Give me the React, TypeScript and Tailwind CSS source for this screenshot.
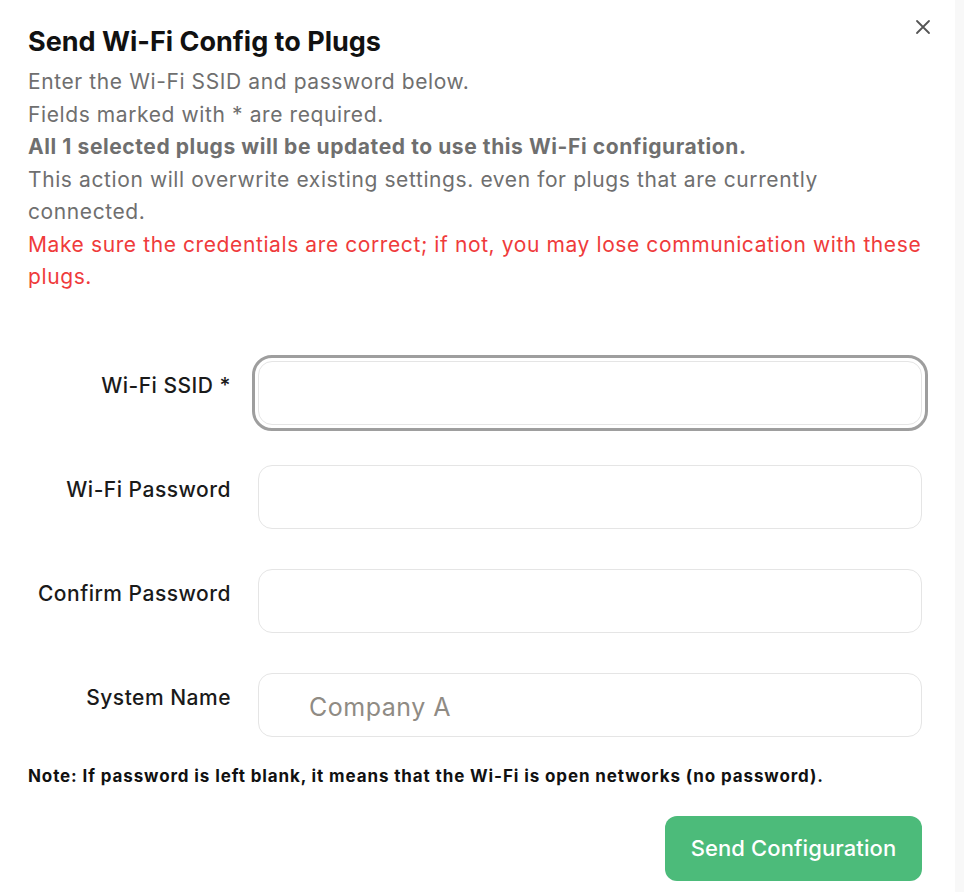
import React from "react";

function Row({ label, placeholder, focused }: { label: string; placeholder?: string; focused?: boolean }) {
  return (
    <div className="flex items-start">
      <label className="w-[203px] shrink-0 text-right text-[21px] leading-[30px] tracking-[0.5px] mt-[10px] font-medium text-[#1a1a1a]">
        {label}
      </label>
      <div className="ml-[27px] flex-1">
        <input
          className={
            "block w-full h-[64px] rounded-[14px] border border-[#e5e5e5] bg-white pl-[50px] pt-[4px] text-[25px] tracking-[0.5px] text-[#333] placeholder:text-[#8f8b84] outline-none " +
            (focused ? "outline-[3px] outline-solid outline-[#9e9e9e] outline-offset-[3px]" : "")
          }
          placeholder={placeholder}
        />
      </div>
    </div>
  );
}

export default function App() {
  return (
    <div className="flex h-[892px] w-[964px] bg-white" style={{ fontFamily: "Inter, 'Noto Sans', sans-serif" }}>
      <div className="relative w-[955px] pl-[28px] pr-[33px] pt-[24px]">
        <button className="absolute right-[24px] top-[19px] text-[#555]">
          <svg width="16" height="16" viewBox="0 0 16 16" fill="none" stroke="currentColor" strokeWidth="1.8" strokeLinecap="round">
            <path d="M2 2 L14 14 M14 2 L2 14" />
          </svg>
        </button>
        <h1 className="text-[27px] leading-[36px] font-bold text-[#111]">Send Wi-Fi Config to Plugs</h1>
        <div className="mt-[6px] text-[21px] leading-[32.5px] tracking-[0.6px] text-[#6f6f6f]">
          <p>Enter the Wi-Fi SSID and password below.</p>
          <p>Fields marked with * are required.</p>
          <p className="font-bold tracking-[0.58px]">All 1 selected plugs will be updated to use this Wi-Fi configuration.</p>
          <p>This action will overwrite existing settings. even for plugs that are currently connected.</p>
          <p className="text-[#ef3b3b]">
            Make sure the credentials are correct; if not, you may lose communication with these plugs.
          </p>
        </div>
        <div className="mt-[67px] flex flex-col gap-[40px]">
          <Row label="Wi-Fi SSID *" focused />
          <Row label="Wi-Fi Password" />
          <Row label="Confirm Password" />
          <Row label="System Name" placeholder="Company A" />
        </div>
        <p className="mt-[27px] text-[17px] leading-[24px] tracking-[0.88px] font-bold text-[#111]">
          Note: If password is left blank, it means that the Wi-Fi is open networks (no password).
        </p>
        <div className="mt-[28px] flex justify-end">
          <button className="h-[65px] w-[257px] rounded-[12px] bg-[#4cbb7a] text-[22px] tracking-[0.1px] font-medium text-white">
            Send Configuration
          </button>
        </div>
      </div>
      <div className="w-[9px] bg-[#f8f8f8]" />
    </div>
  );
}
